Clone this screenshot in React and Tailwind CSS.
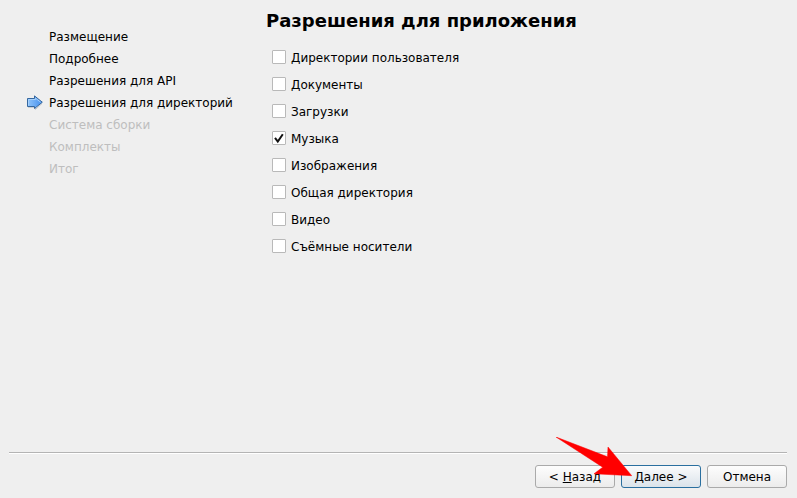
import { useState } from 'react'

const steps = [
  'Размещение',
  'Подробнее',
  'Разрешения для API',
  'Разрешения для директорий',
  'Система сборки',
  'Комплекты',
  'Итог',
]
const currentStep = 3

const directories = [
  'Директории пользователя',
  'Документы',
  'Загрузки',
  'Музыка',
  'Изображения',
  'Общая директория',
  'Видео',
  'Съёмные носители',
]

function StepArrow() {
  return (
    <svg className="w-4 h-4" viewBox="0 0 16 16" aria-hidden="true">
      <defs>
        <linearGradient id="step-fill" x1="0" y1="0" x2="1" y2="0">
          <stop offset="0" stopColor="#8fc4fa" />
          <stop offset="1" stopColor="#4690ee" />
        </linearGradient>
      </defs>
      <path d="M1 12.3H8.5V14.4L15 8.5" fill="none" stroke="#c4c6c8" />
      <path d="M.5 3.5H7.5V.9L15.3 7.2L7.5 13.5V11.5H.5Z" fill="url(#step-fill)" stroke="#35679f" />
      <path d="M1.5 10.5V4.5H8.5V3.2L13.6 7.2" fill="none" stroke="#a5d0fc" />
    </svg>
  )
}

function Pointer() {
  return (
    <svg className="absolute -left-[66px] -top-7 w-[78px] h-10 pointer-events-none" viewBox="0 0 78 40" aria-hidden="true">
      <path d="M1 0L52.5 19.8L53 10L76.7 38.7L39 36.8L47.7 30.2Z" fill="#f00" stroke="#f00" strokeWidth=".5" />
    </svg>
  )
}

function Option({ label, checked, onChange }) {
  return (
    <label className="flex items-start gap-[5px] h-[27px] pt-[5px] w-fit">
      <span className="relative flex">
        <input
          type="checkbox"
          checked={checked}
          onChange={onChange}
          className="appearance-none w-[14px] h-[14px] bg-white border border-[#b9b9b9] rounded-[1px]"
        />
        {checked && (
          <svg className="absolute inset-0 w-[14px] h-[14px] pointer-events-none" viewBox="0 0 14 14" aria-hidden="true">
            <path d="M3 6.8L5.8 10.6L10.8 3.2" fill="none" stroke="#111" strokeWidth="2" />
          </svg>
        )}
      </span>
      {label}
    </label>
  )
}

const button = 'w-20 h-[23px] border rounded-[3px] bg-linear-to-b text-center leading-4'
const plain = 'border-[#aaa] from-[#fdfdfd] to-[#ececec]'

export default function App() {
  const [selected, setSelected] = useState(['Музыка'])

  const toggle = (name) =>
    setSelected(selected.includes(name) ? selected.filter((s) => s !== name) : [...selected, name])

  return (
    <div className="min-h-screen flex flex-col bg-[#efefef] text-black text-[12px] leading-4 font-['DejaVu_Sans',sans-serif]">
      <main className="flex-1 flex">
        <ol className="w-[266px] shrink-0 pt-[26px] pl-[27px]">
          {steps.map((step, i) => (
            <li
              key={step}
              aria-current={i === currentStep ? 'step' : undefined}
              className={`flex items-center gap-[6px] h-[22px] whitespace-nowrap ${i > currentStep ? 'text-[#bebebe]' : ''}`}
            >
              <span className="w-4 shrink-0">{i === currentStep && <StepArrow />}</span>
              {step}
            </li>
          ))}
        </ol>
        <section className="flex-1 pt-[9px]">
          <h1 className="text-[18px] leading-6 font-bold">Разрешения для приложения</h1>
          <div className="pt-3 pl-[6px]">
            {directories.map((name) => (
              <Option key={name} label={name} checked={selected.includes(name)} onChange={() => toggle(name)} />
            ))}
          </div>
        </section>
      </main>
      <footer className="pl-[9px] pr-[10px] pb-[10px]">
        <div className="h-[2px] border-t border-t-[#b4b4b4] bg-white" />
        <div className="flex justify-end gap-[6px] pt-[11px]">
          <button type="button" className={`${button} ${plain}`}>
            &lt; <u>Н</u>азад
          </button>
          <div className="relative flex">
            <button type="button" className={`${button} border-[#2a6f9f] from-[#fafbfc] to-[#dbe3ea]`}>
              <u>Д</u>алее &gt;
            </button>
            <Pointer />
          </div>
          <button type="button" className={`${button} ${plain}`}>
            Отмена
          </button>
        </div>
      </footer>
    </div>
  )
}
